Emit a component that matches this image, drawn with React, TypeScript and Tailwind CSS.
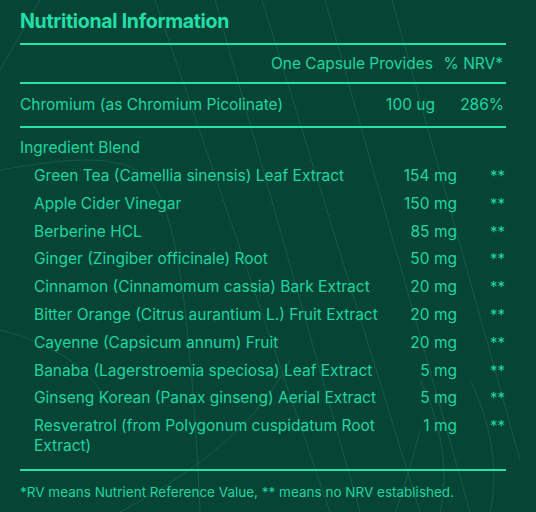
const ingredients = [
  { name: 'Green Tea (Camellia sinensis) Leaf Extract', amount: '154 mg' },
  { name: 'Apple Cider Vinegar', amount: '150 mg' },
  { name: 'Berberine HCL', amount: '85 mg' },
  { name: 'Ginger (Zingiber officinale) Root', amount: '50 mg' },
  { name: 'Cinnamon (Cinnamomum cassia) Bark Extract', amount: '20 mg' },
  { name: 'Bitter Orange (Citrus aurantium L.) Fruit Extract', amount: '20 mg' },
  { name: 'Cayenne (Capsicum annum) Fruit', amount: '20 mg' },
  { name: 'Banaba (Lagerstroemia speciosa) Leaf Extract', amount: '5 mg' },
  { name: 'Ginseng Korean (Panax ginseng) Aerial Extract', amount: '5 mg' },
  { name: 'Resveratrol (from Polygonum cuspidatum Root Extract)', amount: '1 mg' },
]

function Backdrop() {
  return (
    <svg className="absolute inset-0 w-full h-full pointer-events-none" viewBox="0 0 536 512" fill="none">
      <g stroke="#3fae8a" strokeOpacity="0.22" strokeWidth="1">
        <path d="M40 0 L0 70" />
        <path d="M155 0 L330 512" />
        <path d="M215 0 L360 512" />
        <path d="M262 0 L420 512" />
        <path d="M325 0 L470 512" />
        <path d="M392 0 L520 460" />
        <path d="M0 170 C 60 160, 120 150, 150 180 C 175 210, 190 300, 200 512" />
        <path d="M420 380 C 440 420, 450 470, 440 512" />
        <path d="M470 380 C 490 420, 500 470, 490 512" />
        <path d="M120 512 C 200 470, 260 420, 290 360" />
        <path d="M420 430 C 410 470, 400 500, 395 512" />
        <path d="M0 330 C 40 340, 80 360, 100 390" />
      </g>
    </svg>
  )
}

export default function App() {
  return (
    <div className="relative w-[536px] h-[512px] overflow-hidden bg-[#064536] text-[#1fd6a1] font-['Inter',sans-serif]">
      <Backdrop />
      <div className="relative px-[20px] pt-[9px]">
        <h1 className="text-[19.5px] font-bold leading-[24px] tracking-[-0.3px] text-[#22dfa8]">Nutritional Information</h1>
        <div className="mt-[10px] h-[2px] w-[486px] bg-[#22e3ab]" />
        <div className="flex h-[37px] items-center text-[15.5px] w-[486px]">
          <span className="flex-1" />
          <span className="text-right">One Capsule Provides</span>
          <span className="w-[73px] text-right pr-[3px]">% NRV*</span>
        </div>
        <div className="h-[2px] w-[486px] bg-[#22e3ab]" />
        <div className="flex h-[42px] items-center text-[15.5px] w-[486px]">
          <span className="flex-1">Chromium (as Chromium Picolinate)</span>
          <span className="text-right">100 ug</span>
          <span className="w-[71px] text-right pr-[2px]">286%</span>
        </div>
        <div className="h-[2px] w-[486px] bg-[#22e3ab]" />
        <div className="pt-[10px] text-[15.5px] leading-[20px] w-[486px]">
          <div className="h-[20px]">Ingredient Blend</div>
          <div className="mt-[8px] flex flex-col gap-[7.8px] pl-[14px]">
            {ingredients.map((item) => (
              <div key={item.name} className="flex items-start">
                <span className="w-[355px]">{item.name}</span>
                <span className="w-[68px] text-right">{item.amount}</span>
                <span className="flex-1 text-right pr-[1px] text-[15px]">**</span>
              </div>
            ))}
          </div>
        </div>
        <div className="mt-[13px] h-[2px] w-[486px] bg-[#22e3ab]" />
        <p className="mt-[13px] text-[13.5px] leading-[16px]">*RV means Nutrient Reference Value, ** means no NRV established.</p>
      </div>
    </div>
  )
}
